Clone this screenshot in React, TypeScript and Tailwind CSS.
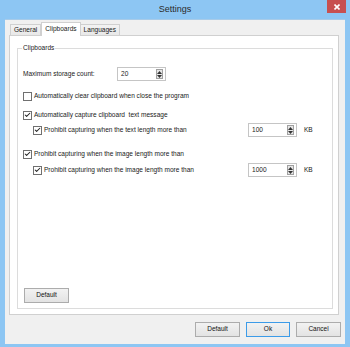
import { Check } from 'lucide-react'

const font = { fontFamily: '"Liberation Sans", Arial, sans-serif' }

function CheckBox({ checked }: { checked?: boolean }) {
  return (
    <span className="w-[9px] h-[9px] shrink-0 border border-[#707070] bg-white flex items-center justify-center">
      {checked && <Check size={8} strokeWidth={3.5} className="text-[#222]" />}
    </span>
  )
}

function SpinBox({ value }: { value: string }) {
  return (
    <div className="w-[49px] h-[14px] border border-[#c5c5c5] bg-white flex items-center justify-between pl-[3px] pr-[2px]">
      <span>{value}</span>
      <span className="w-[7px] h-[10px] border border-[#a0a0a0] bg-[#e6e6e6] flex flex-col items-center justify-center gap-[1px]">
        <svg width="5" height="3" viewBox="0 0 5 3"><path d="M0 3 L2.5 0 L5 3 Z" fill="#333" /></svg>
        <svg width="5" height="3" viewBox="0 0 5 3"><path d="M0 0 L5 0 L2.5 3 Z" fill="#333" /></svg>
      </span>
    </div>
  )
}

function Btn({ label, primary, className = '' }: { label: string; primary?: boolean; className?: string }) {
  return (
    <button
      className={`h-[15px] flex items-center justify-center bg-gradient-to-b from-[#f2f2f2] to-[#e3e3e3] text-[6.5px] text-[#111] border ${
        primary ? 'border-[#3c9be8]' : 'border-[#acacac]'
      } ${className}`}
    >
      {label}
    </button>
  )
}

export default function App() {
  return (
    <div style={font} className="w-[350px] h-[347px] bg-[#8dc6f3] flex flex-col text-[6.55px] text-[#1a1a1a] leading-none">
      {/* Title bar */}
      <div className="h-[19px] flex items-start">
        <div className="w-[23px]" />
        <div className="flex-1 text-center text-[9px] text-[#2b2b2b] pt-[5px]">Settings</div>
        <div className="w-[19px] h-[13px] mr-[4px] bg-[#c75050] flex items-center justify-center">
          <svg width="6" height="6" viewBox="0 0 6 6">
            <path d="M0.5 0.5 L5.5 5.5 M5.5 0.5 L0.5 5.5" stroke="#fff" strokeWidth="1.6" />
          </svg>
        </div>
      </div>

      {/* Client area */}
      <div className="mx-[5px] mb-[3px] flex-1 bg-[#f0f0f0] border-t border-[#a8cbe8] flex flex-col pt-[2px] px-[4px] pb-[7px]">
        {/* Tabs */}
        <div className="h-[13px] flex items-end pl-[1px] relative z-10">
          <div className="h-[11px] px-[3px] border border-b-0 border-[#d0d0d0] bg-gradient-to-b from-[#f3f3f3] to-[#e8e8e8] flex items-center">General</div>
          <div className="h-[14px] -mb-[1px] px-[3px] border border-b-0 border-[#d0d0d0] bg-white flex items-center">Clipboards</div>
          <div className="h-[11px] px-[3px] border border-b-0 border-l-0 border-[#d0d0d0] bg-gradient-to-b from-[#f3f3f3] to-[#e8e8e8] flex items-center">Languages</div>
        </div>

        {/* Tab panel */}
        <div className="w-[330px] h-[280px] border border-[#d0d0d0] bg-white pt-[12px] pl-[7px] pr-[5px] pb-[5px] flex">
          <div className="flex-1 border border-[#dcdcdc] relative flex flex-col pl-[5px] pb-[5px]">
            <span className="absolute -top-[4px] left-[4px] px-[1px] bg-white">Clipboards</span>

            <div className="mt-[18px] h-[14px] flex items-center">
              <span className="w-[94px]">Maximum storage count:</span>
              <SpinBox value="20" />
            </div>

            <div className="mt-[8px] h-[14px] flex items-center gap-[2px]">
              <CheckBox />
              <span>Automatically clear clipboard when close the program</span>
            </div>

            <div className="mt-[5px] h-[14px] flex items-center gap-[2px]">
              <CheckBox checked />
              <span>Automatically capture clipboard&nbsp; text message</span>
            </div>

            <div className="mt-[1px] h-[14px] flex items-center pl-[10px]">
              <div className="w-[215px] flex items-center gap-[2px]">
                <CheckBox checked />
                <span>Prohibit capturing when the text length more than</span>
              </div>
              <SpinBox value="100" />
              <span className="ml-[7px]">KB</span>
            </div>

            <div className="mt-[10px] h-[14px] flex items-center gap-[2px]">
              <CheckBox checked />
              <span>Prohibit capturing when the image length more than</span>
            </div>

            <div className="mt-[2px] h-[14px] flex items-center pl-[10px]">
              <div className="w-[215px] flex items-center gap-[2px]">
                <CheckBox checked />
                <span>Prohibit capturing when the image length more than</span>
              </div>
              <SpinBox value="1000" />
              <span className="ml-[7px]">KB</span>
            </div>

            <div className="flex-1" />
            <div className="pl-[1px]">
              <Btn label="Default" className="w-[45px]" />
            </div>
          </div>
        </div>

        {/* Dialog buttons */}
        <div className="mt-[7px] flex justify-end gap-[6px] -mr-[4px] pr-[4px]">
          <Btn label="Default" className="w-[45px]" />
          <Btn label="Ok" primary className="w-[44px]" />
          <Btn label="Cancel" className="w-[45px]" />
        </div>
      </div>
    </div>
  )
}
